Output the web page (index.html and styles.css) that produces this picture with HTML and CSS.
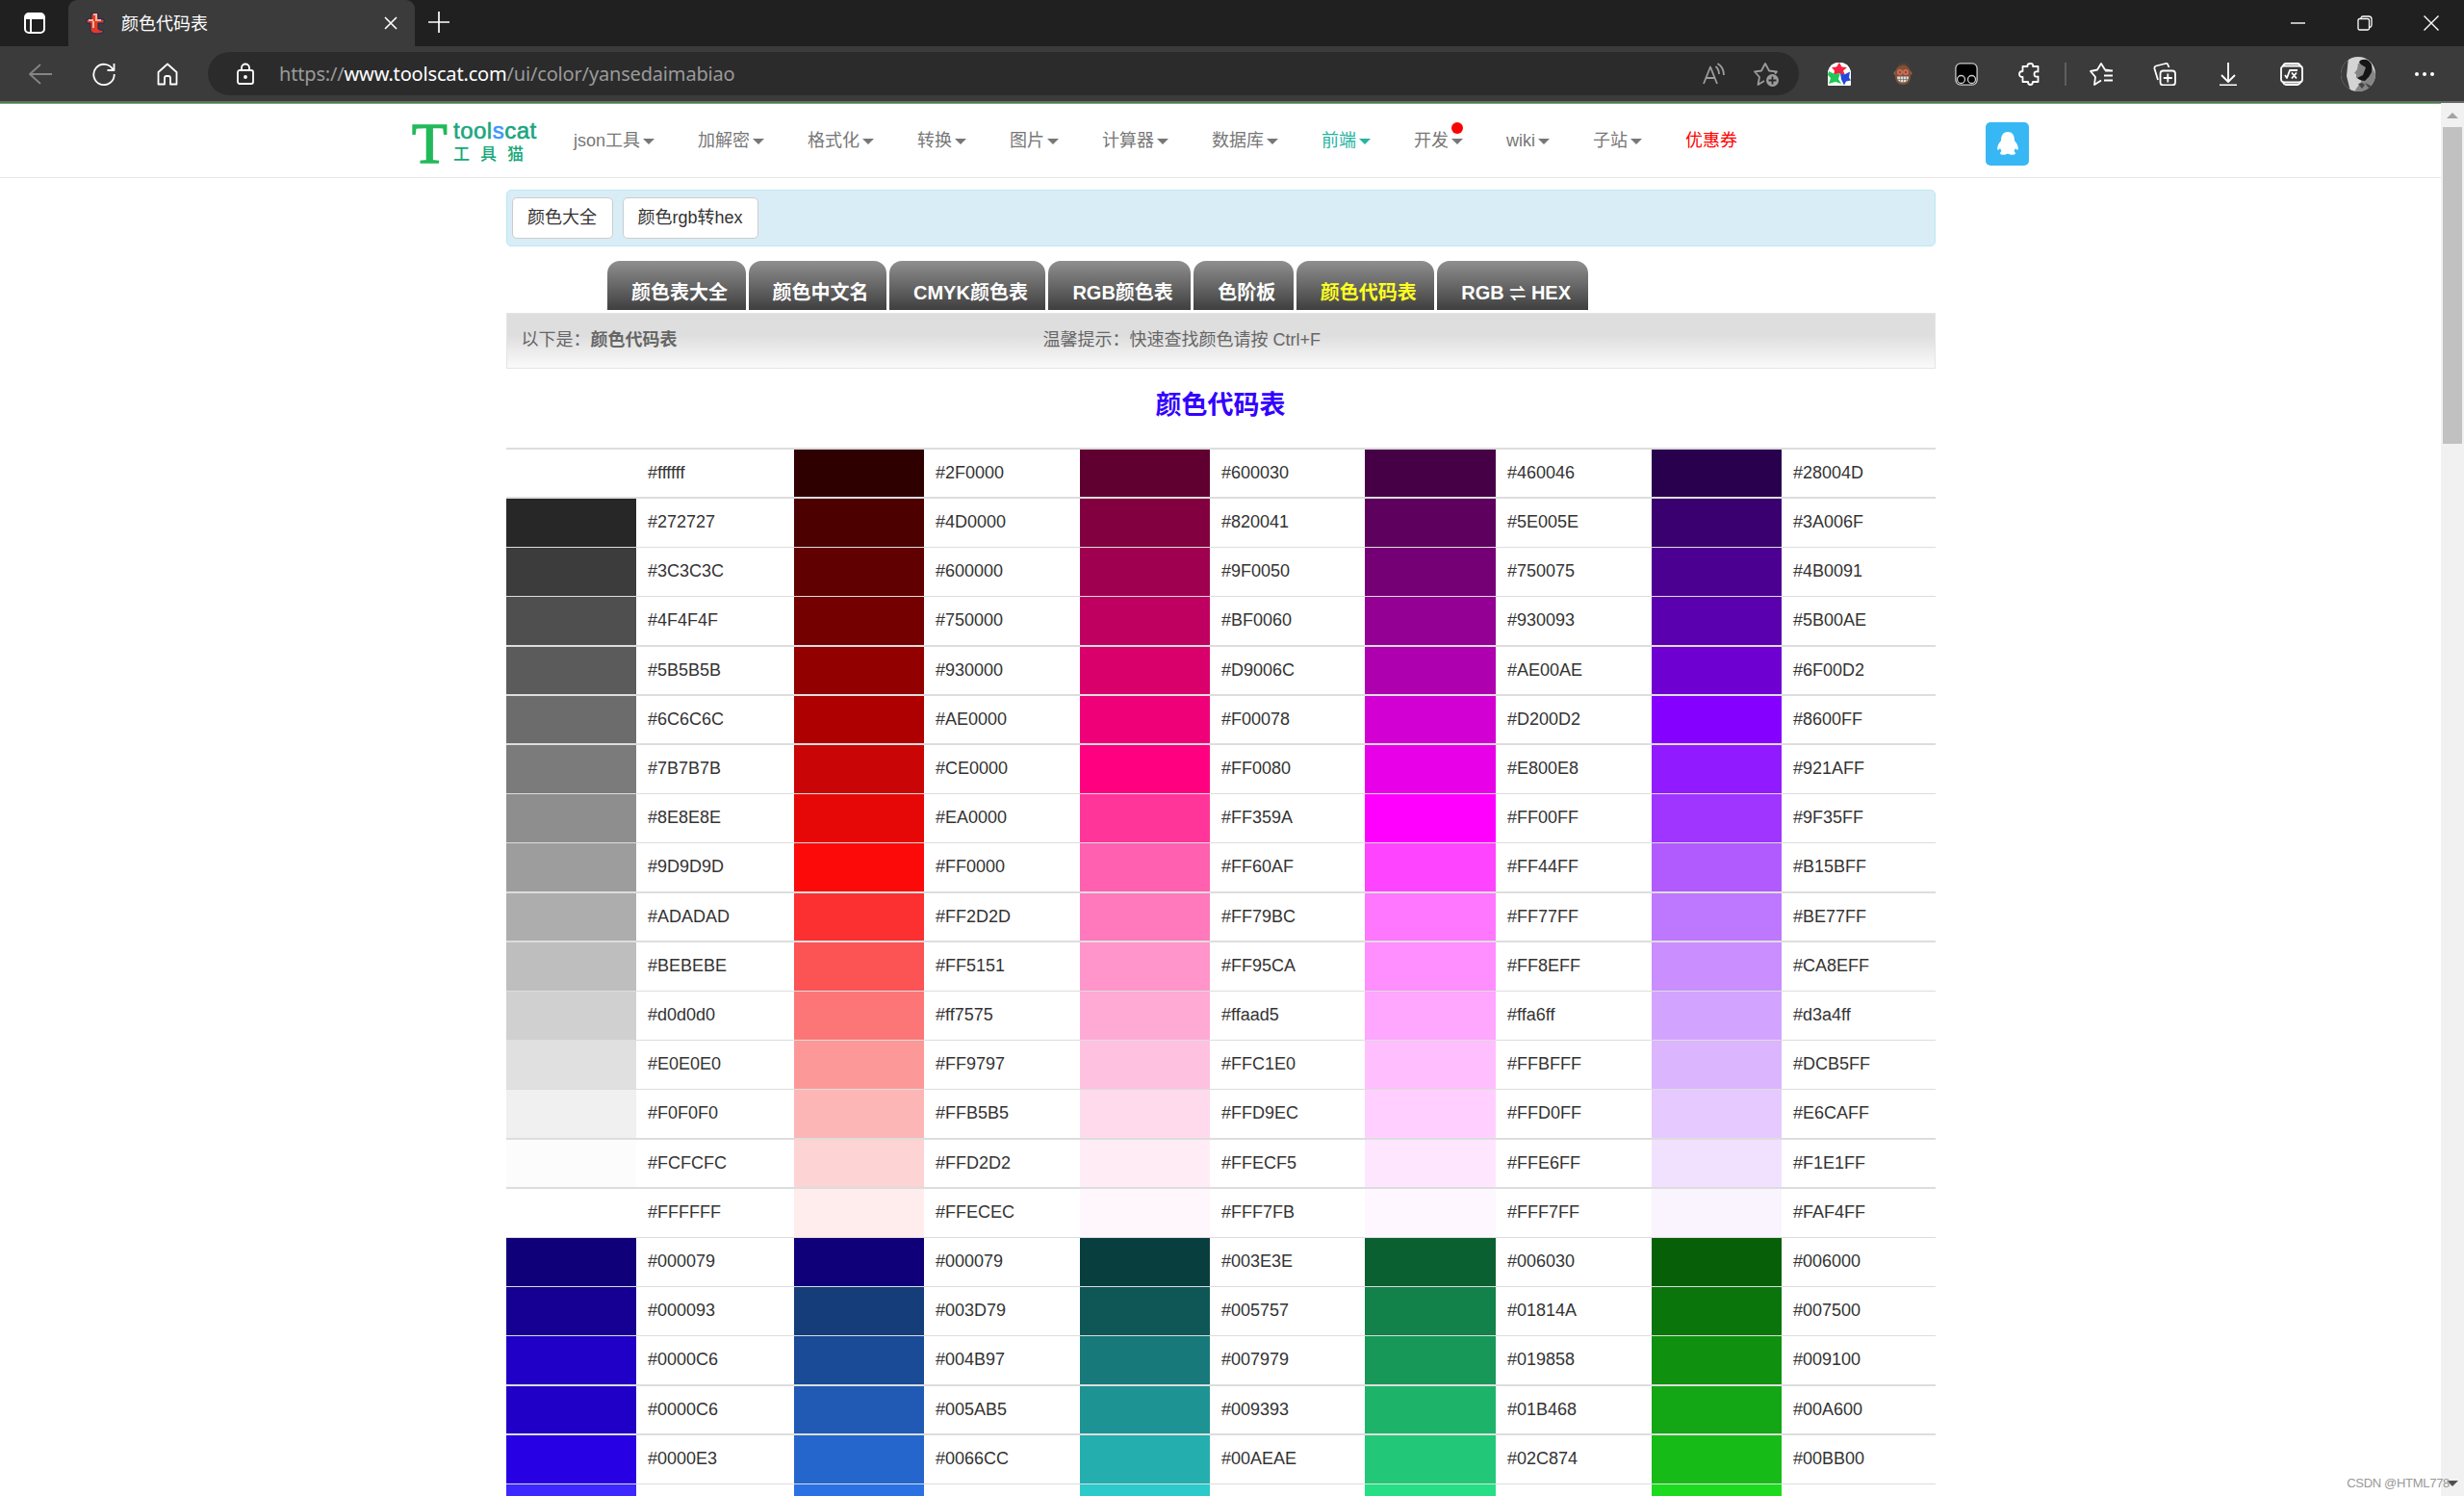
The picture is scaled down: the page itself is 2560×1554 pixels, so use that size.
FILE: index.html
```html
<!DOCTYPE html>
<html lang="zh-CN">
<head>
  <meta charset="UTF-8">
  <title>颜色代码表</title>
  <link rel="stylesheet" href="styles.css">
</head>
<body>
  <!-- tab strip -->
  <div class="tabstrip">
    <svg class="side-icon" width="24" height="24" viewBox="0 0 24 24"><rect x="2" y="2" width="20" height="20" rx="4" fill="none" stroke="#fff" stroke-width="2"/><path d="M2 8V6a4 4 0 0 1 4-4h12a4 4 0 0 1 4 4v2z" fill="#fff"/><path d="M8 8v14" stroke="#fff" stroke-width="2"/></svg>
    <div class="tab">
      <svg width="22" height="24" viewBox="0 0 22 24"><path d="M7 2h7v6h6v4h-6v6q1 2 5 1v3q-12 3-13-3v-7H2V8h5z" fill="#e23a26" stroke="#172a5c" stroke-width="1"/><path d="M9 3h3v6h5M9 10v7M4 9h5" fill="none" stroke="#f3b19b" stroke-width="2"/></svg>
      <span class="tab-title">颜色代码表</span>
      <svg class="tab-close" width="14" height="14" viewBox="0 0 14 14"><path d="M1 1l12 12M13 1L1 13" stroke="#fff" stroke-width="1.6"/></svg>
    </div>
    <svg class="new-tab" width="22" height="22" viewBox="0 0 22 22"><path d="M11 0v22M0 11h22" stroke="#fff" stroke-width="1.7"/></svg>
    <div class="win-buttons">
      <svg width="16" height="16" viewBox="0 0 16 16"><path d="M0 8h15" stroke="#fff" stroke-width="1.4"/></svg>
      <svg width="16" height="16" viewBox="0 0 16 16" fill="none" stroke="#fff" stroke-width="1.3"><rect x="1" y="3.5" width="11.5" height="11.5" rx="1.5"/><path d="M4 3V2.500Q4.500 1 6 1h6q3 0 3 3v6q0 2-2 2.500"/></svg>
      <svg width="16" height="16" viewBox="0 0 16 16"><path d="M.5.5l15 15M15.500.5l-15 15" stroke="#fff" stroke-width="1.4"/></svg>
    </div>
  </div>

  <!-- toolbar -->
  <div class="toolbar">
    <div class="nav-buttons">
      <svg class="off" width="24" height="24" viewBox="0 0 24 24"><path d="M12 2L1 12l11 10M1 12h23"/></svg>
      <svg width="24" height="24" viewBox="0 0 24 24"><path d="M21.500 7.500A10.700 10.700 0 1 0 22.700 12M22.500 1v7h-7"/></svg>
      <svg width="24" height="24" viewBox="0 0 24 24"><path d="M2.500 10L12 1.500 21.500 10v12.500H15V16q0-2-2-2h-2q-2 0-2 2v6.500H2.500z"/></svg>
    </div>
    <div class="address">
      <svg width="18" height="24" viewBox="0 0 18 24"><rect x="1" y="8" width="16" height="14" rx="2"/><path d="M5 8V5.500a4 4 0 0 1 8 0V8"/><circle cx="9" cy="15" r="1" fill="#fff"/></svg>
      <span class="url">https://<b>www.toolscat.com</b>/ui/color/yansedaimabiao</span>
      <svg class="grey read" width="24" height="24" viewBox="0 0 24 24"><path d="M1 22L8 4.500 15 22M3.500 16h9M13.500 4q3.500 3 3.500 8M15.500 1q6.500 4 6.500 12"/></svg>
      <svg class="grey" width="26" height="26" viewBox="0 0 26 26"><path d="M11 20l-6.500 4 1.500-8-5-5.500 7-1L12 2l4 7.500 8 1-2 2"/><circle class="plain" cx="19.500" cy="19.500" r="6.500" fill="#9c9c9c"/><path class="plus" d="M19.500 15.500v8M15.500 19.500h8"/></svg>
    </div>
    <div class="extensions">
      <svg class="art" width="24" height="24" viewBox="0 0 24 24"><path d="M1 24H23Q24 24 24 22V12Q23 0 12 0T0 12V22Q0 24 1 24z" fill="#fff"/><path d="M1 24q-1 0-1-2V9q3-9 12-9t12 9v13q0 2-1 2z" fill="#fff"/><path d="M12 0l2.500 4.500L20 5l-4 3.500 2 4.500-6-2-6 2 1-4.500L4 5l5-.5z" fill="#f8203f"/><path d="M1 9l6 3 6-1-2 6 3 5-6-2-7 2 2-6-3-3z" fill="#20c955"/><path d="M13 11l4 1.500 6-3-1 6 2 3-5 1-2 4-3-6z" fill="#2449d8"/></svg>
      <svg class="art" width="24" height="24" viewBox="0 0 24 24"><path d="M8 4L7 1l3 2 1-3 2 2 2-2v3l3-1-2 3z" fill="#65402b"/><circle cx="4.500" cy="11" r="2" fill="#9b6342"/><circle cx="19.500" cy="11" r="2" fill="#9b6342"/><rect x="4" y="3" width="16" height="20" rx="7.500" fill="#80513a"/><circle cx="9" cy="10" r="3" fill="#b9785a"/><circle cx="15" cy="10" r="3" fill="#b9785a"/><circle cx="9" cy="10" r="1.300" fill="#e22"/><circle cx="15" cy="10" r="1.300" fill="#e22"/><path d="M6 14.500h12q0 6-6 6t-6-6z" fill="#ddd"/><path d="M6.500 17h11v.7h-11zM9 14.500h.7V20H9zM12 14.500h.7v6H12zM15 14.500h.7v5H15z" fill="#77716b"/></svg>
      <svg class="monitor" width="24" height="24" viewBox="0 0 24 24"><rect x=".9" y=".9" width="22.200" height="22.200" rx="5" fill="#000"/><circle cx="6.500" cy="17.500" r="4"/><circle cx="17.500" cy="17.500" r="4"/></svg>
      <svg width="24" height="24" viewBox="0 0 24 24"><path d="M4.500 4h5Q9 1 12.500 1T15 4h5.500v5.500q-4-1-4 2.500t4 2.500V20H15q0 3-2.500 3T10 20H4.500v-5Q1 15 1 12t3.500-3z"/></svg>
    </div>
    <div class="divider"></div>
    <div class="extensions">
      <svg width="24" height="24" viewBox="0 0 24 24"><path d="M12 18.500L5 23l1-8-5-6 7-1.500L12 1l4 6.500 7 1M16 8.500h8M15 13.500h9M15 18.500h9"/></svg>
      <svg width="24" height="24" viewBox="0 0 24 24"><path d="M5 18L1.500 6.500Q1 4 3 3.500L13 1q2-.5 2.500 1.500L16.500 5"/><rect x="7.500" y="8.500" width="15.500" height="15" rx="3"/><path d="M15.300 11.500v9M10.800 16h9"/></svg>
      <svg width="24" height="24" viewBox="0 0 24 24"><path d="M12 0v20M5 13l7 7 7-7M3 23.300h18"/></svg>
      <svg width="24" height="24" viewBox="0 0 24 24"><rect x="1" y="3.500" width="22" height="17" rx="3"/><path d="M3 3.500q1-2.500 3-2.500h12q2 0 3 2.500M3 20.500q1 2.500 3 2.500h12q2 0 3-2.500M5 13l2 3 3-8h8M12 10.500l5 6M17 10.500l-5 6"/></svg>
    </div>
    <svg class="avatar art" width="36" height="36" viewBox="0 0 36 36"><defs><clipPath id="round"><circle cx="18" cy="18" r="18"/></clipPath></defs><g clip-path="url(#round)"><rect width="36" height="36" fill="#d4d4d4"/><path d="M0 0h8L6 20l4 16H0z" fill="#3d3d3d"/><path d="M18 7l-1 6-3 4 2 1v4l6 1-1 3-7 10h22V18l-5-10z" fill="#858585"/><path d="M19 6q1-4 8-3 7 3 5 13l-3 5-4 4q-5 0-8-3l6-3 3-8-5-3z" fill="#151515"/><path d="M18 28l4 5 3-4-3-2zM25 27l5 7 3-3z" fill="#444"/></g></svg>
    <svg class="more art" width="24" height="24" viewBox="0 0 24 24"><g fill="#fff"><circle cx="4" cy="12" r="2"/><circle cx="12" cy="12" r="2"/><circle cx="20" cy="12" r="2"/></g></svg>
  </div>

  <div class="viewport">
    <div class="page">
      <div class="header">
        <div class="logo">
          <span class="logo-t">T</span>
          <div class="logo-name">
            <div class="logo-en">tool<i>s</i>cat</div>
            <div class="logo-cn">工具猫</div>
          </div>
        </div>
        <div class="menu">
          <a class="drop">json工具</a>
          <a class="drop">加解密</a>
          <a class="drop">格式化</a>
          <a class="drop">转换</a>
          <a class="drop">图片</a>
          <a class="drop">计算器</a>
          <a class="drop">数据库</a>
          <a class="drop active">前端</a>
          <a class="drop new">开发</a>
          <a class="drop">wiki</a>
          <a class="drop">子站</a>
          <a class="coupon">优惠券</a>
        </div>
        <div class="qq">
          <svg width="24" height="26" viewBox="0 0 24 26"><path d="M12 1C7 1 5 5 5 10q-5 6-3.500 9.500 1 1 2.500-1.500l1.500 3Q3 23 5 24.500q4 1 7-1 3 2 7 1 2-1.500-.5-3.500L20 18q1.500 2.500 2.500 1.500Q24 16 19 10 19 1 12 1z" fill="#fff"/></svg>
        </div>
      </div>

      <div class="container">
        <div class="related">
          <a class="btn">颜色大全</a>
          <a class="btn">颜色rgb转hex</a>
        </div>
        <div class="tabs">
          <a>颜色表大全</a>
          <a>颜色中文名</a>
          <a>CMYK颜色表</a>
          <a>RGB颜色表</a>
          <a>色阶板</a>
          <a class="current">颜色代码表</a>
          <a class="convert">RGB <span>⇌</span> HEX</a>
        </div>
        <div class="tips">
          <div class="tips-left">以下是：<b>颜色代码表</b></div>
          <div>温馨提示：快速查找颜色请按 Ctrl+F</div>
        </div>
        <h1>颜色代码表</h1>
        <div class="colors" id="colors"></div>
      </div>
    </div>
    <div class="scrollbar">
      <div class="arrow-up"></div>
      <div class="thumb"></div>
      <div class="arrow-down"></div>
    </div>
  </div>
  <div class="watermark">CSDN @HTML778</div>

  <script>
    // label, or label=swatch when the swatch is a different shade
    const rows = [
      "#ffffff #2F0000 #600030 #460046 #28004D",
      "#272727 #4D0000 #820041=#820040 #5E005E #3A006F",
      "#3C3C3C #600000 #9F0050 #750075 #4B0091",
      "#4F4F4F #750000 #BF0060 #930093 #5B00AE",
      "#5B5B5B #930000 #D9006C #AE00AE #6F00D2",
      "#6C6C6C #AE0000 #F00078 #D200D2 #8600FF",
      "#7B7B7B #CE0000=#ca0505 #FF0080 #E800E8 #921AFF",
      "#8E8E8E #EA0000=#e60707 #FF359A #FF00FF #9F35FF",
      "#9D9D9D #FF0000=#fc0a0a #FF60AF #FF44FF #B15BFF",
      "#ADADAD #FF2D2D=#fc3031 #FF79BC #FF77FF #BE77FF",
      "#BEBEBE #FF5151=#fc5354 #FF95CA #FF8EFF #CA8EFF",
      "#d0d0d0 #ff7575=#fc7677 #ffaad5 #ffa6ff #d3a4ff",
      "#E0E0E0 #FF9797=#fd9898 #FFC1E0 #FFBFFF #DCB5FF",
      "#F0F0F0 #FFB5B5=#fdb6b6 #FFD9EC #FFD0FF #E6CAFF",
      "#FCFCFC #FFD2D2=#fdd3d3 #FFECF5 #FFE6FF #F1E1FF",
      "#FFFFFF #FFECEC #FFF7FB #FFF7FF #FAF4FF",
      "#000079=#0f0079 #000079=#0f0079 #003E3E=#093e3e #006030=#0a6031 #006000=#076007",
      "#000093=#150093 #003D79=#143d79 #005757=#0f5757 #01814A=#12814a #007500=#0a750b",
      "#0000C6=#2000c6 #004B97=#1a4b97 #007979=#177979 #019858=#189858 #009100=#0f910f",
      "#0000C6=#2000c6 #005AB5=#205ab5 #009393=#1e9393 #01B468=#1db46a #00A600=#13a615",
      "#0000E3=#2700e3 #0066CC=#2566cc #00AEAE=#25aeae #02C874=#22c878 #00BB00=#17bb18",
      "=#3d28ff =#2a72e3 =#2ccaca =#26df85 =#1cdb1f"
    ];
    const wide = [0, 1, 4, 5, 6, 9, 10, 14, 15, 19, 20];
    const tall = [1, 6, 10, 15, 20];
    const box = document.getElementById('colors');

    rows.forEach((row, i) => {
      const tr = document.createElement('div');
      tr.className = 'row' + (wide.includes(i) ? ' wide' : '') + (tall.includes(i) ? ' tall' : '');
      row.split(' ').forEach(cell => {
        const [code, shade] = cell.split('=');
        tr.innerHTML += `<div style="background-color: ${shade || code}"></div><div class="code">${code}</div>`;
      });
      box.appendChild(tr);
    });
  </script>
</body>
</html>
```
FILE: styles.css
```css
* {
  box-sizing: border-box;
}
body {
  margin: 0;
  height: 1554px;
  overflow: hidden;
  background: #fff;
  color: #333;
  font: 18px "Liberation Sans", "Noto Sans CJK SC", sans-serif;
}
svg {
  display: block;
  flex: none;
}

/* browser */
.tabstrip {
  display: flex;
  align-items: center;
  height: 48px;
  padding: 0 26px 0 24px;
  background: #202020;
}
.tab {
  display: flex;
  align-items: center;
  width: 360px;
  height: 48px;
  margin-left: 23px;
  padding: 0 18px 0 17px;
  border-radius: 9px 9px 0 0;
  background: #3b3b3b;
  color: #fff;
}
.tab-title {
  margin: -2px 0 0 16px;
}
.tab-close {
  margin-left: auto;
}
.new-tab {
  margin: -2px 0 0 14px;
}
.win-buttons {
  display: flex;
  gap: 53px;
  margin-left: auto;
}
.toolbar {
  display: flex;
  align-items: center;
  height: 59px;
  padding: 0 29px 0 30px;
  background: #3b3b3b;
  border-bottom: 2px solid #696969;
}
.toolbar svg {
  fill: none;
  stroke: #fff;
  stroke-width: 1.8;
  stroke-linejoin: round;
}
.toolbar .off {
  stroke: #858585;
}
.toolbar .grey {
  stroke: #9c9c9c;
}
.toolbar .monitor {
  stroke: #ccc;
  stroke-width: 1.3;
}
.toolbar .art,
.toolbar .plain {
  stroke: none;
}
.toolbar .plus {
  stroke: #2b2b2b;
}
.nav-buttons,
.extensions {
  display: flex;
  gap: 42px;
}
.address {
  display: flex;
  align-items: center;
  width: 1653px;
  height: 45px;
  margin: 0 30px;
  padding: 0 21px 0 30px;
  border-radius: 23px;
  background: #2b2b2b;
}
.url {
  margin-left: 26px;
  color: #9a9a9a;
  font: 20px "Noto Sans", sans-serif;
  letter-spacing: -.17px;
}
.url b {
  color: #fff;
  font-weight: normal;
}
.read {
  margin: 0 29px 0 auto;
}
.divider {
  width: 2px;
  height: 24px;
  margin: 0 24px;
  background: #5e5e5e;
}
.avatar {
  margin: 0 39px;
}

/* page */
.viewport {
  display: flex;
  height: 1447px;
}
.page {
  width: 2536px;
  height: 1447px;
  overflow: hidden;
}
.header {
  display: flex;
  align-items: center;
  height: 78px;
  padding: 1px 428px 0;
  border-top: 1px solid #5cb85c;
  border-bottom: 1px solid #e5e5e5;
}
.logo {
  display: flex;
  align-items: center;
  width: 168px;
  padding-top: 4px;
}
.logo-t {
  width: 43px;
  color: #22b95b;
  font: 60px/46px "Liberation Serif", serif;
  -webkit-text-stroke: 1.5px;
}
.logo-en {
  color: #1aa680;
  font-size: 24px;
  line-height: 24px;
  letter-spacing: .5px;
  -webkit-text-stroke: .6px;
}
.logo-en i {
  color: #3d96ff;
  font-style: normal;
}
.logo-cn {
  color: #14a878;
  font-size: 17px;
  font-weight: 500;
  line-height: 26px;
  letter-spacing: 11px;
}
.menu {
  display: flex;
  gap: 45px;
  color: #777;
  line-height: 25px;
}
.menu a {
  display: flex;
  align-items: center;
  gap: 3px;
  white-space: nowrap;
}
.drop::after {
  content: "";
  border: 6px solid transparent;
  border-top-color: currentColor;
  border-bottom: 0;
}
.menu .active {
  color: #26b3a0;
}
.menu .coupon {
  color: #f00;
}
.new {
  position: relative;
}
.new::before {
  content: "";
  position: absolute;
  top: -7px;
  right: 0;
  width: 12px;
  height: 12px;
  border-radius: 50%;
  background: #f00;
}
.qq {
  display: flex;
  align-items: center;
  justify-content: center;
  width: 45px;
  height: 45px;
  margin: 5px 0 0 auto;
  border-radius: 5px;
  background: #38b7f5;
}
.container {
  width: 1485px;
  margin: 12px 0 0 526px;
}
.related {
  display: flex;
  gap: 10px;
  height: 59px;
  padding: 7px 5px;
  border: 1px solid #bce8f1;
  border-radius: 5px;
  background: #d9edf7;
}
.btn {
  height: 43px;
  padding: 0 15.5px 0 15px;
  border: 1px solid #ccc;
  border-radius: 5px;
  background: #fff;
  line-height: 41px;
}
.tabs {
  display: flex;
  gap: 3px;
  height: 51px;
  margin: 15px 0 3px 105px;
}
.tabs a {
  padding: 8px 18.5px 0 25px;
  border-radius: 13px 13px 0 0;
  background: linear-gradient(#8f8f8f, #3f3f3f);
  color: #fff;
  font-size: 20px;
  font-weight: bold;
  line-height: 50px;
  white-space: nowrap;
}
.tabs .current {
  color: #ff2;
}
.tabs .convert {
  width: 157px;
  padding-right: 0;
}
.convert span {
  font-size: 17px;
}
.tips {
  display: flex;
  height: 58px;
  padding-left: 14.5px;
  border: 1px solid #e4e4e4;
  background: linear-gradient(#dedede 40%, #fafafa);
  color: #666;
  line-height: 55px;
}
.tips-left {
  width: 542px;
}
h1 {
  height: 82px;
  margin: 0;
  padding-right: 1px;
  color: #30f;
  font-size: 27px;
  line-height: 76px;
  text-align: center;
}
.row {
  display: grid;
  grid-template-columns: 135px 164px 135px 162px 135px 161px 136px 162px 135px 160px;
  height: 51px;
  border-top: 1px solid #ddd;
}
.row.wide {
  border-top-width: 2px;
}
.row.tall {
  height: 52px;
}
.code {
  padding-left: 12px;
  line-height: 49px;
}

.scrollbar {
  width: 24px;
  padding: 10px 2px 0;
  background: #f1f1f1;
}
.arrow-up,
.arrow-down {
  width: 12px;
  margin: 0 4px;
  border: 6px solid transparent;
  border-top: 0;
  border-bottom-color: #a3a3a3;
}
.thumb {
  height: 329px;
  margin-top: 9px;
  background: #c1c1c1;
}
.arrow-down {
  margin-top: 1077px;
  border: 6px solid transparent;
  border-top-color: #505050;
  border-bottom: 0;
}
.watermark {
  position: absolute;
  right: 15px;
  bottom: 6px;
  color: #999;
  font-size: 13px;
  letter-spacing: -.3px;
}
```
